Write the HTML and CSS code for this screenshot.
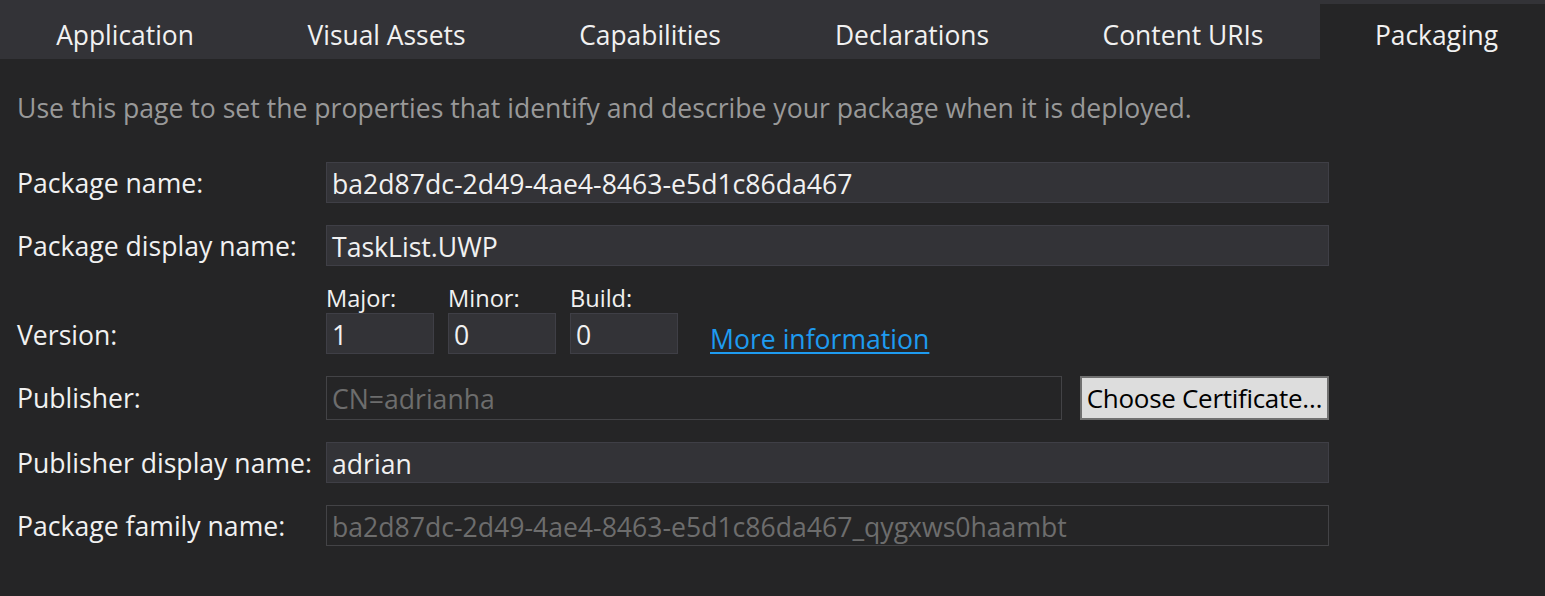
FILE: index.html
```html
<!DOCTYPE html>
<html lang="en">
<head>
<meta charset="utf-8">
<title>Packaging</title>
<link rel="stylesheet" href="styles.css">
</head>
<body>
<div class="tabs">
  <div class="tab">Application</div>
  <div class="tab">Visual Assets</div>
  <div class="tab">Capabilities</div>
  <div class="tab">Declarations</div>
  <div class="tab">Content URIs</div>
  <div class="tab active">Packaging</div>
</div>
<div class="page">
  <p class="intro">Use this page to set the properties that identify and describe your package when it is deployed.</p>
  <div class="form">
    <div class="label">Package name:</div>
    <div class="field">ba2d87dc-2d49-4ae4-8463-e5d1c86da467</div>

    <div class="label">Package display name:</div>
    <div class="field">TaskList.UWP</div>

    <div class="label version-label">Version:</div>
    <div class="version">
      <div class="vpart">
        <div class="vcap">Major:</div>
        <div class="field small">1</div>
      </div>
      <div class="vpart">
        <div class="vcap">Minor:</div>
        <div class="field small">0</div>
      </div>
      <div class="vpart">
        <div class="vcap">Build:</div>
        <div class="field small">0</div>
      </div>
      <a class="link" href="#">More information</a>
    </div>

    <div class="label">Publisher:</div>
    <div class="publisher">
      <div class="field disabled tall">CN=adrianha</div>
      <button class="btn">Choose Certificate…</button>
    </div>

    <div class="label">Publisher display name:</div>
    <div class="field">adrian</div>

    <div class="label">Package family name:</div>
    <div class="field disabled">ba2d87dc-2d49-4ae4-8463-e5d1c86da467_qygxws0haambt</div>
  </div>
</div>
</body>
</html>
```
FILE: styles.css
```css
* { box-sizing: border-box; }
html, body {
  margin: 0;
  padding: 0;
  background: #252526;
  color: #f1f1f1;
  font-family: "Open Sans", "Noto Sans", sans-serif;
  font-size: 26.6px;
  height: 100%;
  overflow: hidden;
}
.tabs {
  display: flex;
  align-items: flex-end;
  height: 59px;
  background: #333337;
}
.tab {
  height: 55px;
  padding: 6px 0 0;
  display: flex;
  align-items: center;
  justify-content: center;
  font-size: 26.4px;
  color: #f1f1f1;
  white-space: nowrap;
}
.tab:nth-child(1) { width: 250px; }
.tab:nth-child(2) { width: 273px; }
.tab:nth-child(3) { width: 254px; }
.tab:nth-child(4) { width: 270px; }
.tab:nth-child(5) { width: 272px; }
.tab.active { width: 225px; background: #252526; margin-left: 1px; padding-left: 8px; }
.page {
  padding: 0 17px;
}
.intro {
  margin: 31px 0 0;
  line-height: 36px;
  color: #999999;
  white-space: nowrap;
}
.form {
  margin-top: 36px;
  display: grid;
  grid-template-columns: 309px 1003px;
  row-gap: 22px;
  align-items: center;
}
.label {
  line-height: 36px;
  white-space: nowrap;
}
.field {
  height: 41px;
  background: #333337;
  border: 1px solid #3f3f46;
  padding: 2px 5px 0;
  display: flex;
  align-items: center;
  line-height: 36px;
  white-space: nowrap;
  overflow: hidden;
}
.field.disabled {
  background: #252526;
  border-color: #434346;
  color: #6d6d6d;
}
.field.tall { height: 44px; flex: 0 0 736px; }
.field.small { width: 108px; }
.version-label { align-self: end; height: 41px; line-height: 41px; padding-top: 2px; }
.version {
  display: flex;
  align-items: flex-end;
  gap: 14px;
}
.vpart { display: flex; flex-direction: column; }
.vcap {
  height: 25px;
  line-height: 20px;
  font-size: 23.6px;
}
.link {
  margin-left: 18px;
  color: #1e9bf0;
  text-decoration: underline;
  text-underline-offset: 3px;
  line-height: 36px;
  position: relative;
  top: 3px;
}
.publisher {
  display: flex;
  gap: 18px;
}
.btn {
  flex: 0 0 249px;
  height: 44px;
  background: #dddddd;
  border: 2px solid #707070;
  color: #000;
  font-family: inherit;
  font-size: 26px;
  letter-spacing: -0.3px;
  padding: 0;
  white-space: nowrap;
  overflow: hidden;
}
```
